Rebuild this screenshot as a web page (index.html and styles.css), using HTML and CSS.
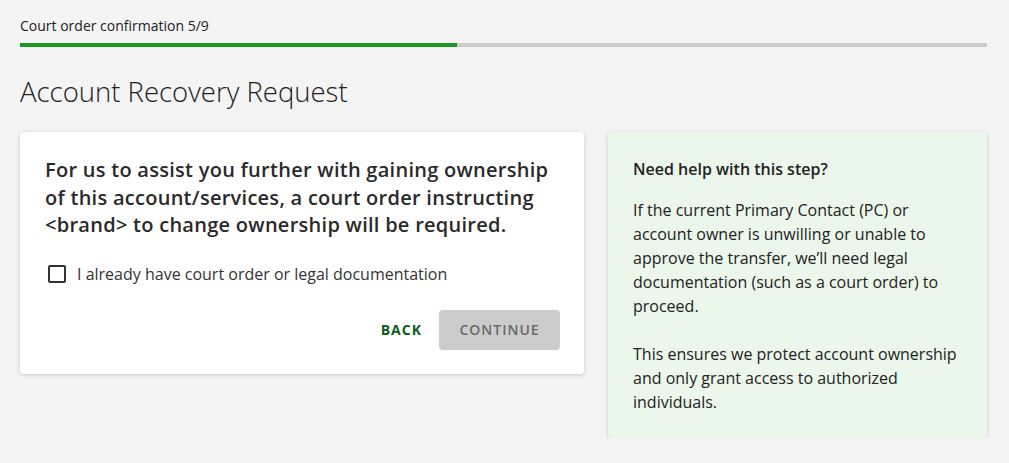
FILE: index.html
```html
<!DOCTYPE html>
<html lang="en">
<head>
<meta charset="utf-8">
<title>Account Recovery Request</title>
<link rel="stylesheet" href="styles.css">
</head>
<body>
<div class="page">
  <div class="step-label">Court order confirmation 5/9</div>
  <div class="progress"><div class="progress-fill" style="width:45.2%"></div></div>
  <h1 class="title">Account Recovery Request</h1>
  <div class="columns">
    <div class="card main-card">
      <p class="lead">For us to assist you further with gaining ownership of this account/services, a court order instructing &lt;brand&gt; to change ownership will be required.</p>
      <label class="check-row">
        <span class="checkbox"></span>
        <span class="check-label">I already have court order or legal documentation</span>
      </label>
      <div class="actions">
        <button class="btn-text">BACK</button>
        <button class="btn-disabled">CONTINUE</button>
      </div>
    </div>
    <div class="card help-card">
      <h2 class="help-title">Need help with this step?</h2>
      <p class="help-text">If the current Primary Contact (PC) or account owner is unwilling or unable to approve the transfer, we’ll need legal documentation (such as a court order) to proceed.</p>
      <p class="help-text">This ensures we protect account ownership and only grant access to authorized individuals.</p>
    </div>
  </div>
</div>
</body>
</html>
```

FILE: styles.css
```css
* { box-sizing: border-box; }
html, body { margin: 0; padding: 0; }
body {
  background: #f4f4f4;
  font-family: "Open Sans", "Noto Sans", sans-serif;
  color: #222;
}
.page {
  padding: 16px 22px 0 20px;
}
.step-label {
  font-size: 14px;
  line-height: 20px;
  color: #222;
}
.progress {
  margin-top: 7px;
  height: 4px;
  background: #cccccc;
}
.progress-fill {
  height: 100%;
  background: #1a9a22;
}
.title {
  margin: 27px 0 0 0;
  font-size: 27.5px;
  line-height: 36px;
  font-weight: 300;
  color: #222;
}
.columns {
  margin-top: 22px;
  display: flex;
  align-items: flex-start;
  gap: 24px;
}
.card {
  border-radius: 4px;
  box-shadow: 0 1px 4px rgba(0,0,0,0.18);
}
.main-card {
  width: 564px;
  background: #ffffff;
  padding: 24px 24px 24px 25px;
}
.lead {
  margin: 0;
  font-size: 20px;
  line-height: 27.5px;
  font-weight: 600;
  letter-spacing: 0.27px;
  color: #2a2a2a;
}
.check-row {
  margin-top: 23px;
  display: flex;
  align-items: center;
  height: 24px;
}
.checkbox {
  width: 18px;
  height: 18px;
  margin-left: 3px;
  border: 2px solid #333;
  border-radius: 2px;
}
.check-label {
  margin-left: 11px;
  font-size: 16px;
  color: #333;
}
.actions {
  margin-top: 24px;
  display: flex;
  justify-content: flex-end;
  align-items: center;
  gap: 17px;
}
.btn-text {
  background: none;
  border: none;
  padding: 0;
  font-family: inherit;
  font-size: 14px;
  font-weight: 700;
  letter-spacing: 1px;
  color: #0b5e1b;
}
.btn-disabled {
  width: 121px;
  height: 40px;
  border: none;
  border-radius: 4px;
  background: #cccccc;
  font-family: inherit;
  font-size: 14px;
  font-weight: 600;
  letter-spacing: 1px;
  color: #6a6a6a;
}
.help-card {
  width: 379px;
  background: #eaf7ea;
  padding: 26px 24px 24px 25px;
}
.help-title {
  margin: 0;
  font-size: 16px;
  line-height: 22px;
  font-weight: 600;
  color: #222;
}
.help-text {
  margin: 18px 0 0 0;
  font-size: 16px;
  line-height: 24px;
  color: #222;
}
.help-text + .help-text {
  margin-top: 24px;
}
```
